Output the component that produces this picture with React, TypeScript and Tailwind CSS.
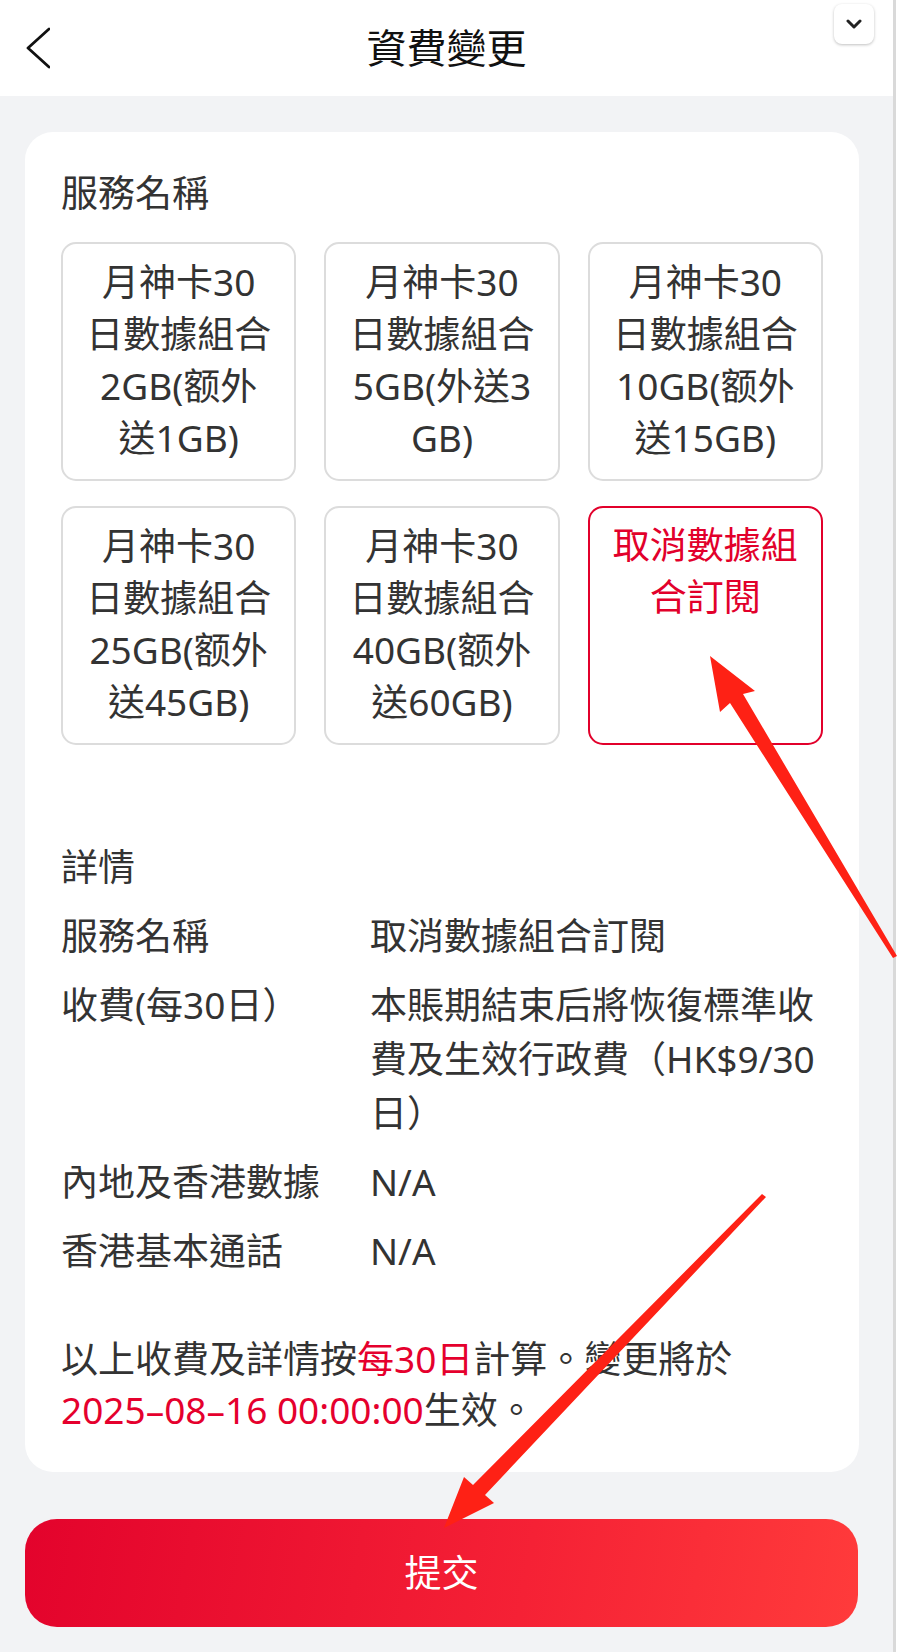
const plans = [
  { lines: ["月神卡30", "日數據組合", "2GB(额外", "送1GB)"] },
  { lines: ["月神卡30", "日數據組合", "5GB(外送3", "GB)"] },
  { lines: ["月神卡30", "日數據組合", "10GB(额外", "送15GB)"] },
  { lines: ["月神卡30", "日數據組合", "25GB(额外", "送45GB)"] },
  { lines: ["月神卡30", "日數據組合", "40GB(额外", "送60GB)"] },
  { lines: ["取消數據組", "合訂閱"], selected: true },
];

const details = [
  { label: "服務名稱", value: ["取消數據組合訂閱"] },
  {
    label: "收費(每30日）",
    value: ["本賬期結束后將恢復標準收", "費及生效行政費（HK$9/30", "日）"],
  },
  { label: "內地及香港數據", value: ["N/A"] },
  { label: "香港基本通話", value: ["N/A"] },
];

const App = () => {
  return (
    <div className="relative flex w-[906px] min-h-[1652px] font-['Noto_Sans','Noto_Sans_CJK_TC',sans-serif] text-[#333333]">
      <div className="w-[893px] bg-[#f2f3f5] pb-[25px]">
        {/* Header */}
        <div className="grid h-[96px] grid-cols-[1fr_auto_1fr] items-center bg-white">
          <div className="pl-[26px]">
            <svg width="24" height="42" viewBox="0 0 24 42" fill="none" stroke="#111" strokeWidth="2.8" strokeLinecap="round" strokeLinejoin="round">
              <polyline points="23,2 2,21 23,40" />
            </svg>
          </div>
          <h1 className="text-[40px] leading-none font-normal text-[#111]">資費變更</h1>
          <div />
        </div>

        {/* Card */}
        <div className="ml-[25px] mt-[36px] w-[834px] rounded-[28px] bg-white px-[36px] pt-[34px] pb-[37px]">
          <div className="text-[37px] leading-[53px]">服務名稱</div>

          <div className="mt-[23px] grid grid-cols-3 gap-x-[28px] gap-y-[25px]">
            {plans.map((plan, i) => (
              <div
                key={i}
                className={
                  plan.selected
                    ? "h-[239px] rounded-[15px] border-2 border-[#e2002b] pt-[11px] text-center text-[37px] leading-[52px] text-[#e2002b]"
                    : "h-[239px] rounded-[15px] border-2 border-[#dcdcdc] pt-[12px] text-center text-[37px] leading-[52px]"
                }
              >
                {plan.lines.map((line) => (
                  <div key={line}>{line}</div>
                ))}
              </div>
            ))}
          </div>

          <div className="mt-[95px] text-[37px] leading-[54px]">詳情</div>
          <div className="flex flex-col gap-[15px] pt-[15px]">
            {details.map((row) => (
              <div key={row.label} className="flex text-[37px] leading-[54px]">
                <div className="w-[309px] shrink-0">{row.label}</div>
                <div>
                  {row.value.map((v) => (
                    <div key={v}>{v}</div>
                  ))}
                </div>
              </div>
            ))}
          </div>

          <p className="mt-[55px] text-[37px] leading-[51px]">
            以上收費及詳情按<span className="text-[#e5002d]">每30日</span>計算。變更將於
            <br />
            <span className="text-[#e5002d]">2025–08–16 00:00:00</span>生效。
          </p>
        </div>

        {/* Submit */}
        <button className="ml-[25px] mt-[47px] flex h-[108px] w-[833px] items-center justify-center rounded-[32px] bg-[linear-gradient(100deg,#e3032c_0%,#f52135_60%,#ff3b3b_100%)] text-[37px] text-white">
          提交
        </button>
      </div>
      <div className="w-[3px] bg-[#d9d9d9]" />
      <div className="flex-1 bg-white" />

      {/* floating toggle */}
      <div className="absolute left-[834px] top-[4px] flex h-[40px] w-[40px] items-center justify-center rounded-[8px] bg-white shadow-[0_1px_3px_rgba(0,0,0,0.25)]">
        <svg width="16" height="10" viewBox="0 0 16 10" fill="none" stroke="#222" strokeWidth="3" strokeLinecap="round" strokeLinejoin="round">
          <polyline points="2,2 8,8 14,2" />
        </svg>
      </div>

      {/* annotation arrows */}
      <svg className="pointer-events-none absolute left-0 top-0" width="906" height="1652" viewBox="0 0 906 1652">
        <polygon fill="#fe2115" points="710,656 720,712 730,703 893,958 897,956 743,694 755,691" />
        <polygon fill="#fe2115" points="444,1528 464,1477 473,1485 762,1194 766,1197 485,1495 494,1503" />
      </svg>
    </div>
  );
};

export default App;
